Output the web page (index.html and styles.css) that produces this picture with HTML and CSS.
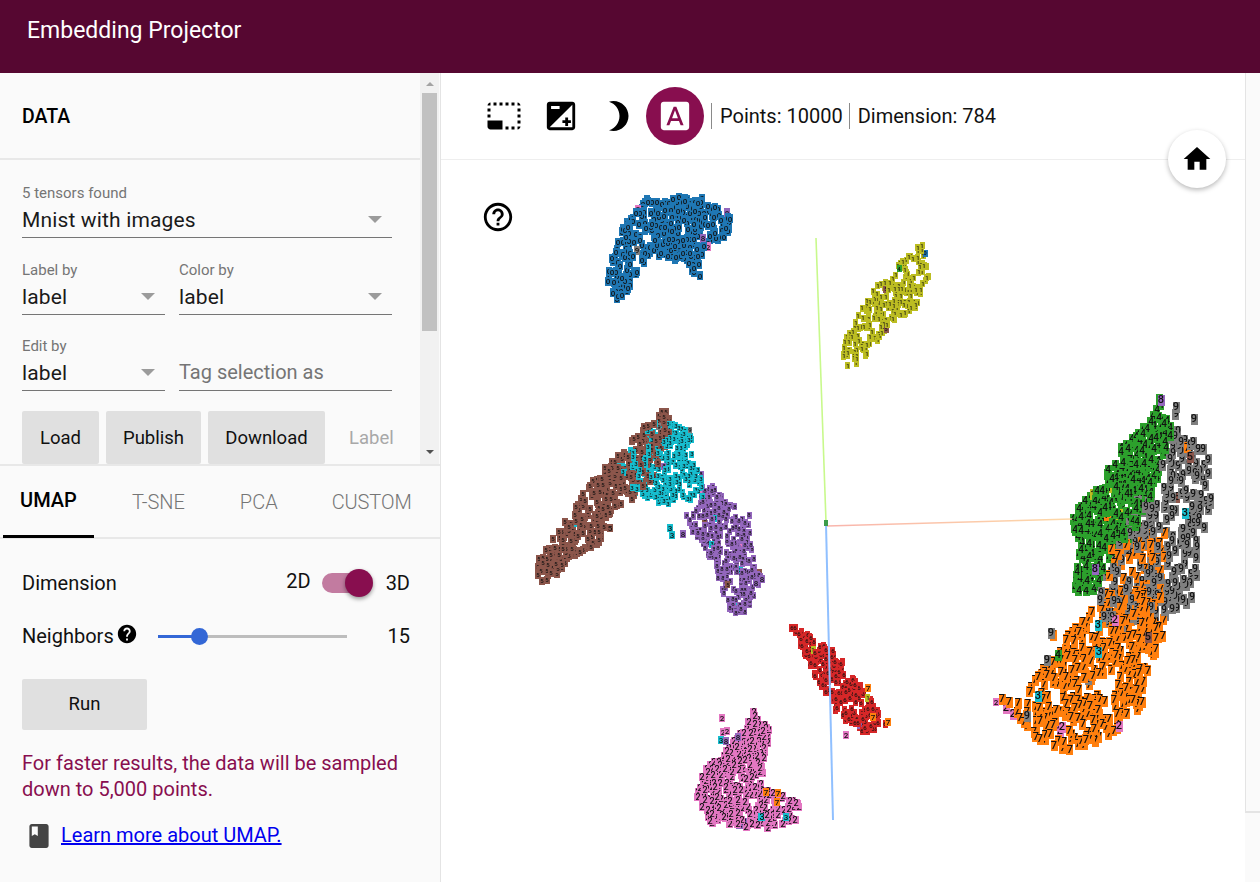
FILE: index.html
```html
<!DOCTYPE html>
<html lang="en">
<head>
<meta charset="utf-8">
<title>Embedding Projector</title>
<link rel="stylesheet" href="styles.css">
</head>
<body>
<header class="app-header">Embedding Projector</header>
<div class="app-body">
  <aside class="left">
    <section class="data-panel">
      <div class="data-content">
        <h2 class="data-title">DATA</h2>
        <div class="data-form">
          <div class="field">
            <div class="caption">5 tensors found</div>
            <div class="select">Mnist with images<i class="caret"></i></div>
          </div>
          <div class="field-row">
            <div class="field">
              <div class="caption">Label by</div>
              <div class="select">label<i class="caret"></i></div>
            </div>
            <div class="field">
              <div class="caption">Color by</div>
              <div class="select">label<i class="caret"></i></div>
            </div>
          </div>
          <div class="field-row field-row-tight">
            <div class="field">
              <div class="caption">Edit by</div>
              <div class="select">label<i class="caret"></i></div>
            </div>
            <div class="field">
              <div class="caption">&nbsp;</div>
              <div class="select placeholder">Tag selection as</div>
            </div>
          </div>
          <div class="btn-row">
            <div class="btn btn-load">Load</div>
            <div class="btn btn-publish">Publish</div>
            <div class="btn btn-download">Download</div>
            <div class="btn-disabled">Label</div>
          </div>
        </div>
      </div>
      <div class="scrollbar">
        <i class="arrow-up"></i>
        <div class="thumb"></div>
        <i class="arrow-down"></i>
      </div>
    </section>
    <section class="method-panel">
      <nav class="tabs">
        <div class="tab tab-active">UMAP</div>
        <div class="tab tab-tsne">T-SNE</div>
        <div class="tab tab-pca">PCA</div>
        <div class="tab tab-custom">CUSTOM</div>
      </nav>
      <div class="umap">
        <div class="row row-dim">
          <span class="grow">Dimension</span>
          <span class="dim-2d">2D</span>
          <div class="toggle"><div class="toggle-track"></div><div class="toggle-thumb"></div></div>
          <span>3D</span>
        </div>
        <div class="row row-neighbors">
          <span>Neighbors</span>
          <svg class="help-small" viewBox="0 0 24 24"><path d="M12 2C6.48 2 2 6.48 2 12s4.48 10 10 10 10-4.48 10-10S17.52 2 12 2zm1 17h-2v-2h2v2zm2.07-7.75l-.9.92C13.45 12.9 13 13.5 13 15h-2v-.5c0-1.1.45-2.1 1.17-2.83l1.24-1.26c.37-.36.59-.86.59-1.41 0-1.1-.9-2-2-2s-2 .9-2 2H8c0-2.21 1.79-4 4-4s4 1.79 4 4c0 .88-.36 1.68-.93 2.25z"/></svg>
          <div class="slider"><div class="slider-on"></div><div class="slider-off"></div><div class="slider-thumb"></div></div>
          <span class="slider-value">15</span>
        </div>
        <div class="btn btn-run">Run</div>
        <p class="warning">For faster results, the data will be sampled down to 5,000 points.</p>
        <div class="learn">
          <svg class="book" viewBox="4 2 16 20"><path d="M18 2H6c-1.1 0-2 .9-2 2v16c0 1.1.9 2 2 2h12c1.1 0 2-.9 2-2V4c0-1.1-.9-2-2-2zM6 4h5v8l-2.5-1.5L6 12V4z"/></svg>
          <a class="learn-link" href="#">Learn more about UMAP.</a>
        </div>
      </div>
    </section>
  </aside>
  <main class="main">
    <div class="toolbar">
      <svg class="ic-select" viewBox="0 0 24 24"><path d="M23 15h-2v2h2v-2zm0-4h-2v2h2v-2zm0 8h-2v2c1 0 2-1 2-2zM15 3h-2v2h2V3zm8 4h-2v2h2V7zm-2-4v2h2c0-1-1-2-2-2zM3 21h8v-6H1v4c0 1.1.9 2 2 2zM3 7H1v2h2V7zm12 12h-2v2h2v-2zm4-16h-2v2h2V3zm0 16h-2v2h2v-2zM3 3C2 3 1 4 1 5h2V3zm0 8H1v2h2v-2zm8-8H9v2h2V3zM7 3H5v2h2V3z"/></svg>
      <svg class="ic-exposure" viewBox="0 0 24 24"><path d="M15 17v2h2v-2h2v-2h-2v-2h-2v2h-2v2h2zm5-15H4c-1.1 0-2 .9-2 2v16c0 1.1.9 2 2 2h16c1.1 0 2-.9 2-2V4c0-1.1-.9-2-2-2zM5 5h6v2H5V5zm15 15H4L20 4v16z"/></svg>
      <svg class="ic-moon" viewBox="0 0 24 24"><path d="M9 2c-1.05 0-2.05.16-3 .46 4.06 1.27 7 5.06 7 9.54 0 4.48-2.94 8.27-7 9.54.95.3 1.95.46 3 .46 5.52 0 10-4.48 10-10S14.52 2 9 2z"/></svg>
      <div class="ic-label">
        <svg class="ic-font" viewBox="0 0 24 24"><path d="M9.93 13.5h4.14L12 7.98zM20 2H4c-1.1 0-2 .9-2 2v16c0 1.1.9 2 2 2h16c1.1 0 2-.9 2-2V4c0-1.1-.9-2-2-2zm-4.05 16.5l-1.14-3H9.17l-1.12 3H5.96l5.11-13h1.87l5.11 13h-2.1z"/></svg>
      </div>
      <span class="stat">Points: 10000</span>
      <span class="stat stat-last">Dimension: 784</span>
    </div>
    <div class="stage">
      <canvas id="scatter" class="scatter"></canvas>
      <svg class="help-large" viewBox="0 0 24 24"><path d="M11 18h2v-2h-2v2zm1-16C6.48 2 2 6.48 2 12s4.48 10 10 10 10-4.48 10-10S17.52 2 12 2zm0 18c-4.41 0-8-3.59-8-8s3.59-8 8-8 8 3.59 8 8-3.59 8-8 8zm0-14c-2.21 0-4 1.79-4 4h2c0-1.1.9-2 2-2s2 .9 2 2c0 2-3 1.75-3 5h2c0-2.25 3-2.5 3-5 0-2.21-1.79-4-4-4z"/></svg>
    </div>
    <div class="home">
      <svg class="ic-home" viewBox="0 0 24 24"><path d="M10 20v-6h4v6h5v-8h3L12 3 2 12h3v8z"/></svg>
    </div>
  </main>
  <aside class="right">
    <div class="right-top"></div>
  </aside>
</div>
<script src="scatter.js"></script>
</body>
</html>
```
FILE: styles.css
```css
* { box-sizing: border-box; }
html, body { margin: 0; height: 100%; overflow: hidden; }
body {
  font-family: Roboto, "Liberation Sans", sans-serif;
  font-size: 20px;
  color: #1a1a1a;
  background: #fff;
  display: flex;
  flex-direction: column;
}
.app-header {
  height: 73px;
  flex: none;
  background: #560731;
  color: #fff;
  font-size: 23px;
  line-height: 61px;
  padding-left: 27px;
}
.app-body { flex: 1; display: flex; min-height: 0; }

.left {
  width: 441px;
  flex: none;
  background: #fafafa;
  border-right: 1px solid #e4e4e4;
  display: flex;
  flex-direction: column;
}
.data-panel {
  height: 393px;
  flex: none;
  display: flex;
  border-bottom: 2px solid #e8e8e8;
  overflow: hidden;
}
.data-content { width: 420px; flex: none; }
.data-title {
  margin: 0;
  height: 87px;
  padding-left: 22px;
  font-size: 19.5px;
  font-weight: 500;
  line-height: 87px;
  color: #000;
  border-bottom: 2px solid #e8e8e8;
}
.data-form {
  padding: 25px 28px 0 22px;
  display: flex;
  flex-direction: column;
  gap: 24px;
}
.field-row { display: grid; grid-template-columns: 143px 213px; column-gap: 14px; }
.field-row-tight { margin-top: -1px; }
.caption { font-size: 15px; line-height: 16px; color: #757575; }
.select {
  position: relative;
  height: 37px;
  padding-top: 7px;
  line-height: 24px;
  font-size: 21px;
  letter-spacing: .15px;
  color: #1a1a1a;
  border-bottom: 1px solid #757575;
}
.placeholder { color: #757575; font-size: 20px; letter-spacing: 0; padding-top: 6px; }
.caret {
  position: absolute;
  right: 10px;
  top: 15px;
  border-left: 7px solid transparent;
  border-right: 7px solid transparent;
  border-top: 7px solid #9b9b9b;
}
.btn-row { display: flex; gap: 7px; margin-top: -4px; align-items: center; }
.btn {
  height: 53px;
  flex: none;
  background: #e0e0e0;
  border-radius: 2px;
  color: #111;
  font-size: 18.5px;
  display: flex;
  align-items: center;
  justify-content: center;
}
.btn-load { width: 77px; }
.btn-publish { width: 95px; }
.btn-download { width: 117px; }
.btn-disabled { margin-left: 17px; font-size: 18.5px; color: #a8a8a8; flex: none; }

.scrollbar {
  width: 19px;
  flex: none;
  background: #f1f1f1;
  display: flex;
  flex-direction: column;
  align-items: center;
  padding-top: 9px;
}
.thumb { width: 15px; height: 238px; background: #c1c1c1; margin-top: 7px; }
.arrow-up {
  border-left: 4px solid transparent;
  border-right: 4px solid transparent;
  border-bottom: 4px solid #a3a3a3;
}
.arrow-down {
  margin-top: 119px;
  border-left: 4px solid transparent;
  border-right: 4px solid transparent;
  border-top: 4px solid #505050;
}

.method-panel { flex: 1; }
.tabs { height: 73px; display: flex; padding-left: 3px; border-bottom: 2px solid #e8e8e8; }
.tab {
  height: 72px;
  padding-top: 24px;
  line-height: 24px;
  font-size: 20px;
  font-weight: 300;
  color: #757575;
}
.tab-active {
  width: 91px;
  padding: 22px 0 0;
  text-align: center;
  font-weight: 500;
  color: #000;
  border-bottom: 3px solid #000;
}
.tab-tsne { margin-left: 38px; }
.tab-pca { margin-left: 55px; }
.tab-custom { margin-left: 54px; letter-spacing: -.1px; }

.umap { padding: 24px 30px 0 22px; }
.row { display: flex; align-items: center; height: 40px; color: #111; }
.row-neighbors { margin-top: 13px; }
.grow { flex: 1; }
.dim-2d { padding-bottom: 4px; margin-right: 11px; }
.toggle { position: relative; width: 51px; height: 28px; margin-right: 13px; }
.toggle-track {
  position: absolute;
  left: 0;
  top: 4px;
  width: 43px;
  height: 20px;
  border-radius: 10px;
  background: #c27ba0;
}
.toggle-thumb {
  position: absolute;
  right: 0;
  top: 0;
  width: 28px;
  height: 28px;
  border-radius: 50%;
  background: #880e4f;
  box-shadow: 0 2px 4px rgba(0, 0, 0, .4);
}
.help-small { width: 22px; height: 22px; margin-left: 2px; margin-top: -4px; fill: #000; flex: none; }
.slider { position: relative; display: flex; width: 189px; height: 3px; margin-left: 20px; }
.slider-on { width: 41px; background: #3367d6; }
.slider-off { flex: 1; background: #bdbdbd; }
.slider-thumb {
  position: absolute;
  left: 33px;
  top: -7px;
  width: 17px;
  height: 17px;
  border-radius: 50%;
  background: #3367d6;
}
.slider-value { margin-left: auto; }
.btn-run { width: 125px; height: 51px; margin-top: 23px; padding-bottom: 2px; }
.warning { margin: 20px 0 0; width: 384px; font-size: 20px; line-height: 26px; color: #880e4f; }
.learn { display: flex; align-items: center; height: 24px; margin: 22px 0 0 7px; }
.book { width: 20px; height: 24px; fill: #444; flex: none; }
.learn-link { margin-left: 12px; margin-top: -2px; color: #0000ee; text-decoration: underline; }

.main { position: relative; flex: 1; min-width: 0; display: flex; flex-direction: column; }
.toolbar {
  height: 87px;
  flex: none;
  display: flex;
  align-items: center;
  padding: 0 0 1px 44px;
  border-bottom: 1px solid #eeeeee;
}
.ic-select { width: 36px; height: 36px; flex: none; margin-left: 1px; margin-right: -1px; }
.ic-exposure { width: 34px; height: 34px; margin-left: 23px; flex: none; }
.ic-moon { width: 36px; height: 36px; margin-left: 22px; flex: none; }
.ic-label {
  width: 58px;
  height: 58px;
  margin-left: 10px;
  border-radius: 50%;
  background: #880e4f;
  display: flex;
  align-items: center;
  justify-content: center;
  flex: none;
}
.ic-font { width: 34px; height: 34px; fill: #fff; }
.stat {
  height: 26px;
  line-height: 26px;
  margin-left: 7px;
  padding-left: 8px;
  border-left: 1px solid #8a8a8a;
  color: #111;
  white-space: nowrap;
}
.stat-last { margin-left: 6px; }
.stage { position: relative; flex: 1; min-height: 0; }
.scatter { display: block; width: 100%; height: 100%; }
.help-large { position: absolute; left: 40px; top: 40px; width: 34px; height: 34px; fill: #000; }
.home {
  position: absolute;
  right: 19px;
  top: 57px;
  width: 58px;
  height: 58px;
  border-radius: 50%;
  background: #fff;
  box-shadow: 0 2px 5px rgba(0, 0, 0, .28);
  display: flex;
  align-items: center;
  justify-content: center;
}
.ic-home { width: 32px; height: 32px; fill: #000; }

.right { width: 15px; flex: none; background: #fafafa; }
.right-top { height: 740px; border-left: 1px solid #e4e4e4; border-bottom: 2px solid #e4e4e4; background: #fafafa; }
```
FILE: scatter.js
```js
(function () {
  var canvas = document.getElementById('scatter');
  var box = canvas.getBoundingClientRect();
  canvas.width = box.width;
  canvas.height = box.height;
  var ctx = canvas.getContext('2d');
  ctx.translate(-box.left, -box.top);

  var seed = 20240611;
  function rnd() {
    seed = (seed + 0x6D2B79F5) | 0;
    var t = Math.imul(seed ^ (seed >>> 15), 1 | seed);
    t = (t + Math.imul(t ^ (t >>> 7), 61 | t)) ^ t;
    return ((t ^ (t >>> 14)) >>> 0) / 4294967296;
  }

  var COLORS = {
    0: '#1f77b4', 1: '#bcbd22', 2: '#e377c2', 3: '#17becf', 4: '#2ca02c',
    5: '#8c564b', 6: '#d62728', 7: '#ff7f0e', 8: '#9467bd', 9: '#7f7f7f'
  };

  function inside(p, x, y) {
    var c = false;
    for (var i = 0, j = p.length - 1; i < p.length; j = i++) {
      if ((p[i][1] > y) !== (p[j][1] > y) &&
          x < (p[j][0] - p[i][0]) * (y - p[i][1]) / (p[j][1] - p[i][1]) + p[i][0]) c = !c;
    }
    return c;
  }

  // Clusters of one group are merged and drawn in shuffled order, so they interleave.
  var groups = [
    [{ d: 0, n: 290, w: 6, h: 9, f: 8, gap: 2, alien: [2, 2, 9, 8], poly: [[613,304],[607,277],[618,233],[648,197],[700,197],[731,212],[728,240],[705,248],[698,288],[688,262],[668,262],[652,250],[637,273],[627,292]] }],
    [{ d: 1, n: 200, w: 5, h: 7, f: 6, gap: 1.6, alien: [4, 0, 5, 8], poly: [[923,241],[929,275],[915,310],[890,325],[868,355],[853,369],[839,362],[842,345],[857,315],[873,290],[905,258]] }],
    [{ d: 6, n: 190, w: 5, h: 8, f: 6, gap: 1.5, alien: [7, 1, 2, 8], poly: [[790,624],[833,650],[866,693],[888,725],[863,736],[833,710],[808,663]] }],
    [{ d: 2, n: 300, w: 7, h: 8, f: 9, gap: 2, alien: [3, 8], poly: [[752,707],[771,733],[765,753],[762,787],[802,803],[795,822],[767,828],[712,825],[696,795],[699,770],[722,757],[740,733]] }],
    [
      { d: 8, n: 290, w: 5, h: 7, f: 6, gap: 1.6, alien: [3, 3, 2, 5], poly: [[700,472],[722,497],[750,515],[752,545],[762,580],[745,615],[730,612],[722,590],[712,562],[702,545],[682,517],[700,507]] },
      { d: 3, n: 240, w: 5, h: 7, f: 6, gap: 1.6, alien: [8, 9], poly: [[655,422],[695,426],[690,450],[698,463],[706,497],[680,502],[663,505],[643,497],[630,490],[612,470],[640,440]] },
      { d: 5, n: 320, w: 6, h: 8, f: 6, gap: 1.6, alien: [3, 7], poly: [[662,408],[675,420],[665,445],[655,478],[637,497],[612,510],[600,545],[572,558],[553,582],[540,585],[536,563],[553,535],[568,514],[596,475],[622,452],[643,428]] }
    ],
    [
      { d: 4, n: 270, w: 7, h: 11, f: 10, gap: 3, alien: [8, 1, 7], poly: [[1160,398],[1172,430],[1160,470],[1155,490],[1145,510],[1127,540],[1113,560],[1093,592],[1073,590],[1080,547],[1071,517],[1098,485],[1118,450],[1147,423]] },
      { d: 9, n: 225, w: 7, h: 11, f: 10, gap: 3.6, alien: [3, 7, 7, 5], poly: [[1177,407],[1182,427],[1207,453],[1215,480],[1205,530],[1198,550],[1197,600],[1160,622],[1105,630],[1098,595],[1120,540],[1130,510],[1155,475],[1168,450]] },
      { d: 7, n: 45, w: 7, h: 11, f: 11, gap: 5, alien: [7], poly: [[1110,540],[1165,530],[1165,600],[1100,610]] },
      { d: 7, n: 320, w: 7, h: 11, f: 11, gap: 3, alien: [2, 3, 9, 5], hole: [1106, 686, 12, 13], poly: [[1147,590],[1167,600],[1163,643],[1150,660],[1142,712],[1120,733],[1060,754],[1033,735],[1023,720],[1030,687],[1060,645],[1093,607],[1120,590]] }
    ]
  ];

  function bounds(p) {
    var b = [1e9, 1e9, -1e9, -1e9];
    p.forEach(function (q) {
      b[0] = Math.min(b[0], q[0]); b[1] = Math.min(b[1], q[1]);
      b[2] = Math.max(b[2], q[0]); b[3] = Math.max(b[3], q[1]);
    });
    return b;
  }

  function dot(x, y, digit, w, h, f) {
    ctx.fillStyle = COLORS[digit];
    ctx.fillRect(Math.round(x - w / 2), Math.round(y - h / 2), w, h);
    ctx.fillStyle = '#111';
    ctx.font = '500 ' + f + 'px Roboto, sans-serif';
    ctx.textAlign = 'center';
    ctx.textBaseline = 'middle';
    ctx.fillText(String(digit), Math.round(x), Math.round(y) + 0.5);
  }

  function sample(c) {
    var b = bounds(c.poly), pts = [], tries = 0;
    while (pts.length < c.n && tries < 40000) {
      tries++;
      var x = b[0] + rnd() * (b[2] - b[0]);
      var y = b[1] + rnd() * (b[3] - b[1]);
      if (!inside(c.poly, x, y)) continue;
      if (c.hole) {
        var hx = (x - c.hole[0]) / c.hole[2], hy = (y - c.hole[1]) / c.hole[3];
        if (hx * hx + hy * hy < 1) continue;
      }
      var near = false;
      for (var i = 0; i < pts.length; i++) {
        var dx = pts[i][0] - x, dy = pts[i][1] - y;
        if (dx * dx + dy * dy < c.gap * c.gap) { near = true; break; }
      }
      if (near) continue;
      var digit = c.d;
      if (rnd() < 0.015) digit = c.alien[Math.floor(rnd() * c.alien.length)];
      pts.push([x, y, digit, c.w, c.h, c.f]);
    }
    return pts;
  }

  groups.forEach(function (group) {
    var all = [];
    group.forEach(function (c) { all = all.concat(sample(c)); });
    for (var i = all.length - 1; i > 0; i--) {
      var j = Math.floor(rnd() * (i + 1)), t = all[i];
      all[i] = all[j];
      all[j] = t;
    }
    all.forEach(function (p) { dot(p[0], p[1], p[2], p[3], p[4], p[5]); });
  });

  // Loose points that sit outside the main shapes.
  [
    [1161,400,8],[1190,457,5],[1176,407,9],[1194,419,9],[1095,569,8],[1185,513,3],
    [1038,696,3],[996,702,2],[1006,708,2],[1013,714,2],[1002,699,7],[1009,702,7],[1017,712,7],
    [1020,718,7],[1024,722,7],[1027,716,9],[1018,703,7],[1053,635,7],[1051,633,9],
    [1115,620,2],[1098,625,3],[1148,637,5],[1120,607,7],[1047,660,9],[1058,655,4],
    [1142,702,7],[1137,690,7],[1133,700,7],[1119,726,2],[1062,727,2],
    [756,583,8],[762,579,8],[672,535,3],[683,534,8],[670,528,3],[610,528,5],
    [738,737,8],[723,732,2],[727,731,2],[721,740,3],[726,741,8],[778,793,7],[766,792,7],
    [777,802,7],[786,817,3],[846,735,2],[888,722,7],[873,717,7],[868,688,7],[722,718,2]
  ].forEach(function (p) {
    var big = p[0] > 1000;
    dot(p[0], p[1], p[2], big ? 7 : 6, big ? 11 : 8, big ? 11 : 8);
  });

  // Axes.
  ctx.lineWidth = 1.6;
  ctx.strokeStyle = '#c8f98c';
  ctx.beginPath(); ctx.moveTo(816, 238); ctx.lineTo(826, 522); ctx.stroke();
  var red = ctx.createLinearGradient(826, 0, 1072, 0);
  red.addColorStop(0, '#f9b4ac');
  red.addColorStop(1, '#fdd9a8');
  ctx.strokeStyle = red;
  ctx.beginPath(); ctx.moveTo(827, 526); ctx.lineTo(1072, 519); ctx.stroke();
  ctx.strokeStyle = '#90c0ff';
  ctx.lineWidth = 2;
  ctx.beginPath(); ctx.moveTo(826, 524); ctx.lineTo(833, 820); ctx.stroke();
  ctx.fillStyle = '#3d9c4a';
  ctx.fillRect(824, 520, 4, 6);
})();
```
